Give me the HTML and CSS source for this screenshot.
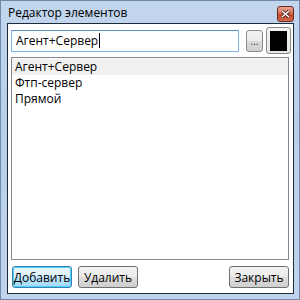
FILE: index.html
```html
<!DOCTYPE html>
<html lang="ru">
<head>
    <meta charset="UTF-8">
    <title>Редактор элементов</title>
    <link rel="stylesheet" href="styles.css">
</head>
<body>
    <div class="window">
        <div class="titlebar">
            <span class="title">Редактор элементов</span>
            <button type="button" class="close-btn">
                <svg width="9" height="8" viewBox="0 0 9 8">
                    <path d="M1 1 L8 7 M8 1 L1 7" stroke="#4a1a12" stroke-width="3"/>
                    <path d="M1 1 L8 7 M8 1 L1 7" stroke="#fff" stroke-width="1.6"/>
                </svg>
            </button>
        </div>
        <div class="client">
            <div class="edit-row">
                <div class="textbox">Агент+Сервер<span class="caret"></span></div>
                <button type="button" class="dots-btn">...</button>
                <button type="button" class="color-btn"><span class="swatch"></span></button>
            </div>
            <ul class="list">
                <li class="selected">Агент+Сервер</li>
                <li>Фтп-сервер</li>
                <li>Прямой</li>
            </ul>
            <div class="actions">
                <button type="button" class="btn focused">Добавить</button>
                <button type="button" class="btn">Удалить</button>
                <button type="button" class="btn close">Закрыть</button>
            </div>
        </div>
    </div>
</body>
</html>
```

FILE: styles.css
```css
* {
    margin: 0;
    padding: 0;
    box-sizing: border-box;
}

body {
    width: 300px;
    height: 300px;
    font-family: 'Segoe UI', 'Open Sans', sans-serif;
    font-size: 12px;
    color: #000;
    background: #fff;
}

.window {
    width: 300px;
    height: 300px;
    display: flex;
    flex-direction: column;
    border: 1px solid #6f8aac;
    background: linear-gradient(180deg, #c2d6ee 0%, #b9cfe9 40%, #bfd3ea 100%);
}

.titlebar {
    height: 22px;
    display: flex;
    align-items: center;
    justify-content: space-between;
    padding-left: 7px;
    padding-right: 5px;
}

.title {
    font-size: 12px;
    line-height: 16px;
    margin-top: 2px;
}

.close-btn {
    width: 17px;
    height: 16px;
    margin-top: 4px;
    border: 1px solid #6b2a20;
    border-radius: 3px;
    background: linear-gradient(180deg, #e8a493 0%, #d4725a 45%, #c3482c 55%, #cf6a4a 100%);
    display: flex;
    align-items: center;
    justify-content: center;
}

.client {
    flex: 1;
    display: flex;
    flex-direction: column;
    margin: 0 5px 5px 6px;
    border: 1px solid #1e2a38;
    background: #fff;
    padding: 3px 2px 5px 3px;
}

.edit-row {
    height: 27px;
    display: flex;
    align-items: center;
}

.textbox {
    flex: 1;
    height: 22px;
    border: 1px solid #7eb4ea;
    border-top-color: #5d93c9;
    padding-left: 4px;
    line-height: 20px;
    font-size: 12px;
    display: flex;
    align-items: center;
}

.caret {
    width: 1px;
    height: 15px;
    background: #000;
    margin-left: 1px;
}

.dots-btn {
    width: 17px;
    height: 22px;
    margin-left: 7px;
    border: 1px solid #8a8a8a;
    border-radius: 3px;
    background: linear-gradient(180deg, #f4f4f4 0%, #ebebeb 50%, #dcdcdc 51%, #cfcfcf 100%);
    font-size: 10px;
    line-height: 10px;
    color: #333;
    font-family: 'Segoe UI', 'Open Sans', sans-serif;
}

.color-btn {
    width: 25px;
    height: 27px;
    margin-left: 3px;
    border: 1px solid #8a8a8a;
    border-radius: 3px;
    background: linear-gradient(180deg, #f4f4f4 0%, #e6e6e6 100%);
    display: flex;
    align-items: center;
    justify-content: center;
}

.swatch {
    display: block;
    width: 17px;
    height: 20px;
    background: #000;
}

.list {
    flex: 1;
    list-style: none;
    margin: 3px 2px 0 0;
    border: 1px solid #828790;
    padding-top: 1px;
}

.list li {
    height: 16px;
    line-height: 16px;
    padding-left: 3px;
}

.list li.selected {
    background: #f0f0f0;
}

.actions {
    display: flex;
    gap: 6px;
    margin-top: 6px;
    padding-left: 1px;
    padding-right: 2px;
}

.btn {
    width: 60px;
    height: 22px;
    border: 1px solid #707070;
    border-radius: 3px;
    background: linear-gradient(180deg, #f2f2f2 0%, #ebebeb 50%, #dddddd 51%, #cfcfcf 100%);
    font-family: 'Segoe UI', 'Open Sans', sans-serif;
    font-size: 12px;
    color: #000;
}

.btn.focused {
    border-color: #3c7fb1;
    background: linear-gradient(180deg, #eaf6fd 0%, #d9f0fc 50%, #bee6fd 51%, #a7d9f5 100%);
    box-shadow: inset 0 0 0 1px #48d4fa;
}

.btn.close {
    margin-left: auto;
}
```
